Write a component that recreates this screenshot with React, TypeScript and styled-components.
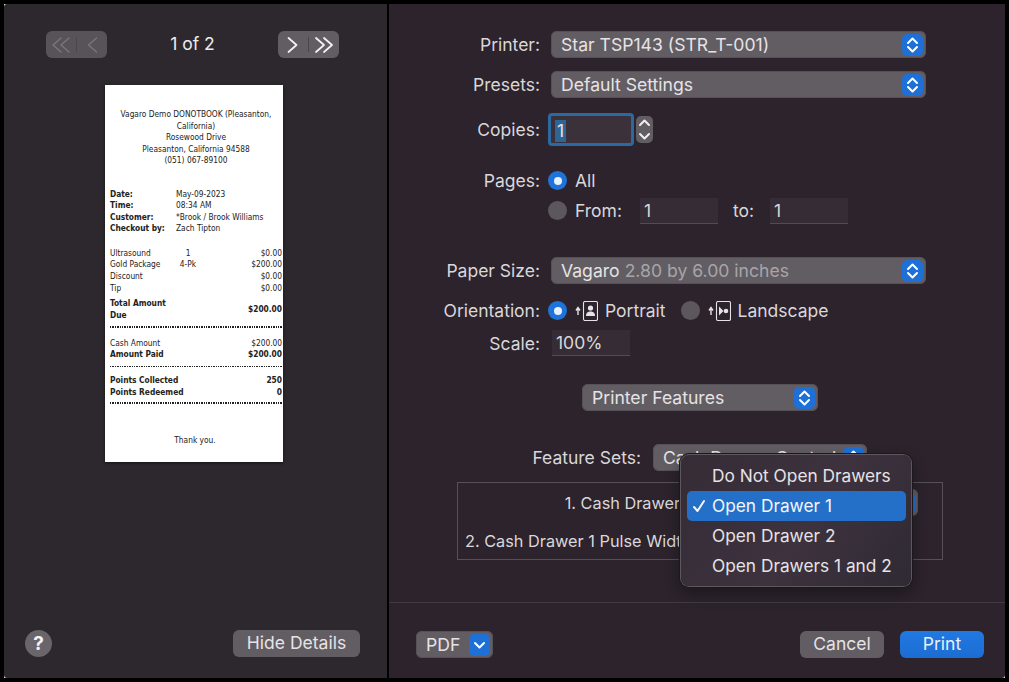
import styled, { createGlobalStyle } from 'styled-components'

const GlobalStyle = createGlobalStyle`
  html, body {
    margin: 0;
    padding: 0;
    height: 100%;
    background: #000;
    overflow: hidden;
  }
  body {
    font-family: Inter, "Liberation Sans", sans-serif;
    -webkit-font-smoothing: antialiased;
  }
`

const Screen = styled.div`
  position: relative;
  display: flex;
  gap: 2px;
  width: 1001px;
  height: 674px;
  padding: 4px;
`

const Corner = styled.span<{ $side: 'left' | 'right'; $edge: 'top' | 'bottom' }>`
  position: absolute;
  ${(p) => p.$side}: 4px;
  ${(p) => p.$edge}: 4px;
  width: 3px;
  height: 3px;
  background: #e8e8e8;
`

const LeftPanel = styled.aside`
  position: relative;
  display: flex;
  flex-direction: column;
  width: 383px;
  background: #2c282d;
  border-radius: 3px 0 0 3px;
`

const RightPanel = styled.main`
  position: relative;
  display: flex;
  flex-direction: column;
  width: 616px;
  background: #2c232c;
  border-radius: 0 0 3px 0;
`

const PageNav = styled.div`
  display: flex;
  align-items: center;
  justify-content: space-between;
  margin-top: 27px;
  padding: 0 48px 0 42px;
`

const PageCount = styled.span`
  margin-bottom: 2px;
  font-size: 17.5px;
  color: #eceaec;
`

const NavGroup = styled.div<{ $disabled?: boolean }>`
  display: flex;
  align-items: center;
  width: 61px;
  height: 27px;
  border-radius: 6px;
  background: ${(p) => (p.$disabled ? '#575358' : '#625d63')};
  color: ${(p) => (p.$disabled ? '#7a767b' : '#f4f2f4')};
`

const NavCell = styled.span`
  flex: 1;
  display: flex;
  align-items: center;
  justify-content: center;
`

const NavDivider = styled.span`
  width: 1px;
  height: 15px;
  background: #4a464b;
`

const Receipt = styled.section`
  display: flex;
  flex-direction: column;
  width: 178px;
  height: 377px;
  margin: 27px 0 0 101px;
  padding: 24px 1px 0 5px;
  box-sizing: border-box;
  background: #fff;
  box-shadow: 0 1px 3px rgba(0, 0, 0, 0.5);
  font-family: "DejaVu Sans Condensed", "DejaVu Sans", sans-serif;
  font-size: 8.3px;
  line-height: 11.55px;
  color: #222;
`

const ReceiptHead = styled.div`
  text-align: center;
  margin-bottom: 22px;
`

const InfoRow = styled.div`
  display: grid;
  grid-template-columns: 66px 1fr;
`

const ItemList = styled.div`
  margin-top: 13px;
`

const ItemRow = styled.div<{ $strong?: boolean; $top?: number }>`
  display: grid;
  grid-template-columns: 66px 28px 1fr;
  align-items: center;
  margin-top: ${(p) => p.$top ?? 0}px;
  font-weight: ${(p) => (p.$strong ? 700 : 400)};
`

const Qty = styled.span`
  text-align: center;
  margin-left: -4px;
`

const WideCell = styled.span`
  grid-column: span 2;
`

const Amount = styled.span`
  text-align: right;
`

const Bold = styled.span`
  font-weight: 700;
`

const Rule = styled.hr<{ $top: number; $bottom: number }>`
  width: 100%;
  height: 1.5px;
  margin: ${(p) => p.$top}px 0 ${(p) => p.$bottom}px;
  border: 0;
  background: repeating-linear-gradient(90deg, #222 0 1.4px, #fff 1.4px 2.4px);
`

const ThankYou = styled.div`
  margin-top: 31px;
  text-align: center;
  padding-right: 2px;
`

const LeftFooter = styled.div`
  display: flex;
  align-items: center;
  justify-content: space-between;
  margin-top: auto;
  padding: 0 27px 21px 21px;
`

const HelpButton = styled.div`
  display: flex;
  align-items: center;
  justify-content: center;
  width: 27px;
  height: 27px;
  border-radius: 50%;
  background: #6a656b;
  color: #f4f2f4;
  font-size: 19px;
  font-weight: 700;
`

const Button = styled.div<{ $width: number; $primary?: boolean }>`
  display: flex;
  align-items: center;
  justify-content: center;
  width: ${(p) => p.$width}px;
  height: 27px;
  padding-bottom: 2px;
  box-sizing: border-box;
  border-radius: 6px;
  background: ${(p) => (p.$primary ? 'linear-gradient(#2079e2, #1c6dd2)' : '#625d63')};
  color: ${(p) => (p.$primary ? '#e8f0fb' : '#e6e3e6')};
  font-size: 17.5px;
`

const Form = styled.div`
  flex: 1;
  padding-top: 27px;
`

const FieldRow = styled.div<{ $top?: number; $height?: number }>`
  display: grid;
  grid-template-columns: 151px 1fr;
  column-gap: 11px;
  align-items: center;
  height: ${(p) => p.$height ?? 27}px;
  margin-top: ${(p) => p.$top ?? 0}px;
`

const Label = styled.label<{ $small?: boolean }>`
  text-align: right;
  font-size: ${(p) => (p.$small ? 16.3 : 17.5)}px;
  color: #dad7da;
  white-space: nowrap;
`

const Select = styled.div<{ $width?: number; $left?: number }>`
  display: flex;
  align-items: center;
  justify-content: space-between;
  width: ${(p) => (p.$width ? `${p.$width}px` : 'auto')};
  height: 27px;
  margin-left: ${(p) => p.$left ?? 0}px;
  padding: 0 3px 0 10px;
  box-sizing: border-box;
  border-radius: 6px;
  background: #625d63;
  box-shadow: inset 0 0 0 1px #565157;
  color: #e6e3e6;
  font-size: 17.6px;
  white-space: nowrap;
`

const Muted = styled.span`
  color: #a8a5a9;
`

const BlueCap = styled.span`
  display: flex;
  align-items: center;
  justify-content: center;
  flex: none;
  width: 21px;
  height: 22px;
  border-radius: 5px;
  background: #1f70d6;
  color: #fff;
`

const CopiesControl = styled.div`
  display: flex;
  align-items: center;
  gap: 2px;
  margin-left: -3px;
`

const FocusInput = styled.div`
  width: 86px;
  height: 33px;
  padding: 4px 0 0 4px;
  box-sizing: border-box;
  border: 3px solid #2a6a9e;
  border-radius: 4px;
  background: #3a313a;
  font-size: 17.5px;
  line-height: 22px;
  color: #e6e3e6;
`

const Selection = styled.span`
  display: inline-block;
  padding: 0 2px;
  background: #2f6494;
  line-height: 22px;
`

const Stepper = styled.div`
  display: flex;
  flex-direction: column;
  align-items: center;
  justify-content: space-around;
  width: 17px;
  height: 27px;
  border-radius: 5px;
  background: #625d63;
  color: #f0eef0;
`

const OptionRow = styled.div`
  display: flex;
  align-items: center;
  font-size: 17.5px;
  color: #dad7da;
`

const Radio = styled.span<{ $on?: boolean }>`
  display: flex;
  align-items: center;
  justify-content: center;
  flex: none;
  width: 19px;
  height: 19px;
  margin: 0 8px 0 -3px;
  border-radius: 50%;
  background: ${(p) => (p.$on ? '#1f74dc' : '#5c575d')};

  &::after {
    content: '';
    display: ${(p) => (p.$on ? 'block' : 'none')};
    width: 8px;
    height: 8px;
    border-radius: 50%;
    background: #e8f1fc;
  }
`

const TextInput = styled.div<{ $width: number; $left?: number }>`
  width: ${(p) => p.$width}px;
  height: 26px;
  margin-left: ${(p) => p.$left ?? 0}px;
  padding: 0 4px;
  box-sizing: border-box;
  background: #352c35;
  border-bottom: 1px solid #524c52;
  font-size: 17.5px;
  line-height: 26px;
  color: #dad7da;
`

const ToLabel = styled.span`
  width: 37px;
  margin-left: 15px;
`

const OrientationIcon = styled.svg`
  flex: none;
  margin-right: 7px;
  color: #e6e3e6;
`

const OrientationGap = styled.span`
  width: 18px;
`

const FeatureRow = styled.div`
  display: grid;
  grid-template-columns: 252px 214px;
  column-gap: 12px;
  align-items: center;
  height: 27px;
  margin-top: 33px;
`

const FeatureBox = styled.div`
  width: 486px;
  height: 78px;
  margin: 11px 0 0 68px;
  padding: 6px 24px 0 0;
  box-sizing: border-box;
  border: 1px solid #565157;
`

const BoxRow = styled.div`
  display: grid;
  grid-template-columns: 238px 1fr;
  column-gap: 30px;
  align-items: center;
  height: 27px;
  margin-bottom: 11px;
`

const RightFooter = styled.footer`
  display: flex;
  align-items: flex-start;
  gap: 16px;
  height: 76px;
  padding: 28px 21px 0 27px;
  box-sizing: border-box;
  border-top: 1px solid #423a43;
`

const PdfButton = styled(Select)`
  width: 77px;
  margin-right: auto;
`

const DrawerMenu = styled.ul`
  position: absolute;
  left: 292px;
  top: 451px;
  width: 230px;
  height: 131px;
  margin: 0;
  padding: 6px 5px 6px 6px;
  box-sizing: border-box;
  list-style: none;
  border-radius: 8px;
  background: linear-gradient(125deg, #352c36 0%, #3d323e 55%, #2f2a34 100%);
  box-shadow: 0 0 0 1px #5d585e, 0 0 0 2px #1c181c, 0 6px 16px rgba(0, 0, 0, 0.4);
`

const MenuItem = styled.li<{ $active?: boolean }>`
  position: relative;
  height: 30px;
  padding-left: 25px;
  border-radius: 5px;
  background: ${(p) => (p.$active ? '#2470c8' : 'transparent')};
  font-size: 17.3px;
  line-height: 30px;
  color: ${(p) => (p.$active ? '#f2f6fc' : '#e6e3e6')};
  white-space: nowrap;
`

const Check = styled.svg`
  position: absolute;
  left: 5px;
  top: 8px;
`

const UpDown = () => (
  <svg width="13" height="18" viewBox="0 0 13 18" fill="none" stroke="currentColor" strokeWidth="2" strokeLinecap="round" strokeLinejoin="round">
    <path d="M2 7l4.5-4.5L11 7" />
    <path d="M2 11l4.5 4.5L11 11" />
  </svg>
)

const Chevron = ({ up }: { up?: boolean }) => (
  <svg width="13" height="8" viewBox="0 0 13 8" fill="none" stroke="currentColor" strokeWidth="2" strokeLinecap="round" strokeLinejoin="round">
    <path d={up ? 'M2 6l4.5-4.5L11 6' : 'M2 2l4.5 4.5L11 2'} />
  </svg>
)

const NavArrow = ({ double, left }: { double?: boolean; left?: boolean }) => (
  <svg
    width={double ? 18 : 11}
    height="16"
    viewBox={double ? '0 0 18 16' : '0 0 11 16'}
    fill="none"
    stroke="currentColor"
    strokeWidth={left ? 1.4 : 1.7}
    strokeLinecap="round"
    strokeLinejoin="round"
  >
    {left ? (
      <>
        <path d={double ? 'M9 1L1 8l8 7' : 'M9.5 1L1.5 8l8 7'} />
        {double && <path d="M17 1L9 8l8 7" />}
      </>
    ) : (
      <>
        <path d={double ? 'M1 1l8 7-8 7' : 'M1.5 1l8 7-8 7'} />
        {double && <path d="M9 1l8 7-8 7" />}
      </>
    )}
  </svg>
)

const PortraitIcon = () => (
  <OrientationIcon width="23" height="20" viewBox="0 0 23 20" fill="none">
    <path d="M3 14V7M1 9.5L3 6.5l2 3" stroke="currentColor" strokeWidth="1.4" />
    <rect x="8.5" y="0.5" width="14" height="19" rx="1.5" stroke="currentColor" strokeWidth="1.1" />
    <circle cx="15.5" cy="7" r="2.6" fill="currentColor" />
    <path d="M11 15c0-3.5 2.2-4.5 4.5-4.5S20 11.500 20 15z" fill="currentColor" />
  </OrientationIcon>
)

const LandscapeIcon = () => (
  <OrientationIcon width="23" height="20" viewBox="0 0 23 20" fill="none">
    <path d="M3 14V7M1 9.5L3 6.500l2 3" stroke="currentColor" strokeWidth="1.4" />
    <rect x="8.5" y="0.5" width="14" height="19" rx="1.5" stroke="currentColor" strokeWidth="1.1" />
    <path d="M11 5.500v9l4.500-4.500z" fill="currentColor" />
    <circle cx="18" cy="10" r="2.300" fill="currentColor" />
  </OrientationIcon>
)

const Dropdown = ({ children, width, left }: { children?: React.ReactNode; width?: number; left?: number }) => (
  <Select $width={width} $left={left}>
    <span>{children}</span>
    <BlueCap>
      <UpDown />
    </BlueCap>
  </Select>
)

const App = () => (
  <>
    <GlobalStyle />
    <Screen>
      <Corner $side="left" $edge="top" />
      <Corner $side="left" $edge="bottom" />
      <Corner $side="right" $edge="bottom" />
      <LeftPanel>
        <PageNav>
          <NavGroup $disabled>
            <NavCell><NavArrow double left /></NavCell>
            <NavDivider />
            <NavCell><NavArrow left /></NavCell>
          </NavGroup>
          <PageCount>1 of 2</PageCount>
          <NavGroup>
            <NavCell><NavArrow /></NavCell>
            <NavDivider />
            <NavCell><NavArrow double /></NavCell>
          </NavGroup>
        </PageNav>
        <Receipt>
          <ReceiptHead>
            Vagaro Demo DONOTBOOK (Pleasanton, California)
            <br />
            Rosewood Drive
            <br />
            Pleasanton, California 94588
            <br />
            (051) 067-89100
          </ReceiptHead>
          <InfoRow><Bold>Date:</Bold><span>May-09-2023</span></InfoRow>
          <InfoRow><Bold>Time:</Bold><span>08:34 AM</span></InfoRow>
          <InfoRow><Bold>Customer:</Bold><span>*Brook / Brook Williams</span></InfoRow>
          <InfoRow><Bold>Checkout by:</Bold><span>Zach Tipton</span></InfoRow>
          <ItemList>
            <ItemRow><span>Ultrasound</span><Qty>1</Qty><Amount>$0.00</Amount></ItemRow>
            <ItemRow><span>Gold Package</span><Qty>4-Pk</Qty><Amount>$200.00</Amount></ItemRow>
            <ItemRow><span>Discount</span><Qty /><Amount>$0.00</Amount></ItemRow>
            <ItemRow><span>Tip</span><Qty /><Amount>$0.00</Amount></ItemRow>
          </ItemList>
          <ItemRow $strong $top={4}>
            <WideCell>Total Amount<br />Due</WideCell>
            <Amount>$200.00</Amount>
          </ItemRow>
          <Rule $top={5} $bottom={10} />
          <ItemRow><WideCell>Cash Amount</WideCell><Amount>$200.00</Amount></ItemRow>
          <ItemRow $strong><WideCell>Amount Paid</WideCell><Amount>$200.00</Amount></ItemRow>
          <Rule $top={5} $bottom={8} />
          <ItemRow $strong><WideCell>Points Collected</WideCell><Amount>250</Amount></ItemRow>
          <ItemRow $strong><WideCell>Points Redeemed</WideCell><Amount>0</Amount></ItemRow>
          <Rule $top={4} $bottom={0} />
          <ThankYou>Thank you.</ThankYou>
        </Receipt>
        <LeftFooter>
          <HelpButton>?</HelpButton>
          <Button $width={127}>Hide Details</Button>
        </LeftFooter>
      </LeftPanel>
      <RightPanel>
        <Form>
          <FieldRow>
            <Label>Printer:</Label>
            <Dropdown width={375}>Star TSP143 (STR_T-001)</Dropdown>
          </FieldRow>
          <FieldRow $top={13}>
            <Label>Presets:</Label>
            <Dropdown width={375}>Default Settings</Dropdown>
          </FieldRow>
          <FieldRow $top={15} $height={32}>
            <Label>Copies:</Label>
            <CopiesControl>
              <FocusInput><Selection>1</Selection></FocusInput>
              <Stepper>
                <Chevron up />
                <Chevron />
              </Stepper>
            </CopiesControl>
          </FieldRow>
          <FieldRow $top={22}>
            <Label>Pages:</Label>
            <OptionRow><Radio $on />All</OptionRow>
          </FieldRow>
          <FieldRow $top={3}>
            <span />
            <OptionRow>
              <Radio />From:
              <TextInput $width={78} $left={18}>1</TextInput>
              <ToLabel>to:</ToLabel>
              <TextInput $width={78}>1</TextInput>
            </OptionRow>
          </FieldRow>
          <FieldRow $top={33}>
            <Label>Paper Size:</Label>
            <Dropdown width={375}>Vagaro <Muted>2.80 by 6.00 inches</Muted></Dropdown>
          </FieldRow>
          <FieldRow $top={13}>
            <Label>Orientation:</Label>
            <OptionRow>
              <Radio $on />
              <PortraitIcon />
              Portrait
              <OrientationGap />
              <Radio />
              <LandscapeIcon />
              Landscape
            </OptionRow>
          </FieldRow>
          <FieldRow $top={6} $height={26}>
            <Label>Scale:</Label>
            <TextInput $width={78} $left={1}>100%</TextInput>
          </FieldRow>
          <FieldRow $top={28}>
            <span />
            <Dropdown width={236} left={31}>Printer Features</Dropdown>
          </FieldRow>
          <FeatureRow>
            <Label>Feature Sets:</Label>
            <Dropdown>Cash Drawer Control</Dropdown>
          </FeatureRow>
          <FeatureBox>
            <BoxRow>
              <Label $small>1. Cash Drawer 1:</Label>
              <Dropdown />
            </BoxRow>
            <BoxRow>
              <Label $small>2. Cash Drawer 1 Pulse Width:</Label>
              <TextInput $width={100} />
            </BoxRow>
          </FeatureBox>
        </Form>
        <RightFooter>
          <PdfButton>
            <span>PDF</span>
            <BlueCap><Chevron /></BlueCap>
          </PdfButton>
          <Button $width={84}>Cancel</Button>
          <Button $width={84} $primary>Print</Button>
        </RightFooter>
        <DrawerMenu>
          <MenuItem>Do Not Open Drawers</MenuItem>
          <MenuItem $active>
            <Check width="14" height="14" viewBox="0 0 14 14" fill="none" stroke="currentColor" strokeWidth="2" strokeLinecap="round" strokeLinejoin="round">
              <path d="M2 8l3.5 4L12 2" />
            </Check>
            Open Drawer 1
          </MenuItem>
          <MenuItem>Open Drawer 2</MenuItem>
          <MenuItem>Open Drawers 1 and 2</MenuItem>
        </DrawerMenu>
      </RightPanel>
    </Screen>
  </>
)

export default App
